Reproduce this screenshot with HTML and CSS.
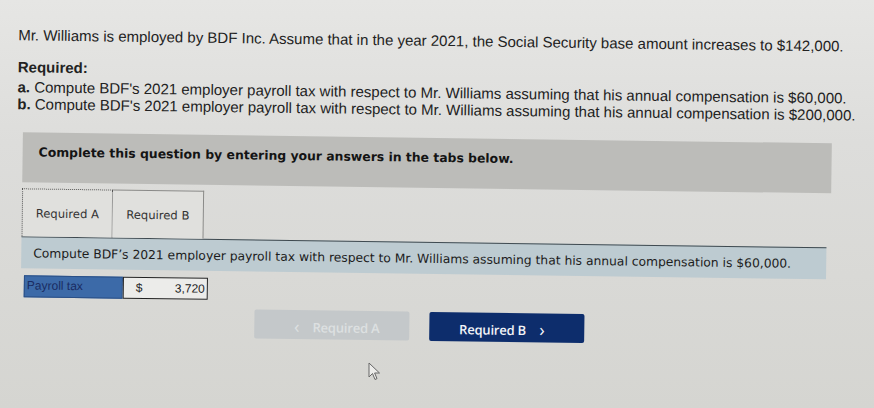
FILE: index.html
```html
<!DOCTYPE html>
<html lang="en">
<head>
  <meta charset="UTF-8" />
  <meta name="viewport" content="width=device-width, initial-scale=1.0" />
  <title>Payroll Tax Question</title>
  <link rel="stylesheet" href="styles.css">
</head>
<body>
  <div class="page">
    <p class="intro">Mr. Williams is employed by BDF Inc. Assume that in the year 2021, the Social Security base amount increases to $142,000.</p>

    <div class="required">
      <div class="required-title">Required:</div>
      <div class="req-list">
        <div class="req-line"><b>a.</b> Compute BDF's 2021 employer payroll tax with respect to Mr. Williams assuming that his annual compensation is $60,000.</div>
        <div class="req-line"><b>b.</b> Compute BDF's 2021 employer payroll tax with respect to Mr. Williams assuming that his annual compensation is $200,000.</div>
      </div>
    </div>

    <div class="panel">
      <div class="panel-head">Complete this question by entering your answers in the tabs below.</div>

      <div class="tabs">
        <div class="tab active">Required A</div>
        <div class="tab">Required B</div>
      </div>

      <div class="tab-body">Compute BDF’s 2021 employer payroll tax with respect to Mr. Williams assuming that his annual compensation is $60,000.</div>

      <div class="answer">
        <div class="answer-label">Payroll tax</div>
        <div class="answer-input">
          <span class="dollar">$</span>
          <span class="amount">3,720</span>
        </div>
      </div>

      <div class="nav">
        <button class="nav-btn prev" disabled><span class="chev">&lsaquo;</span> Required A</button>
        <button class="nav-btn next">Required B <span class="chev">&rsaquo;</span></button>
      </div>
    </div>
  </div>

  <svg class="cursor" width="14" height="20" viewBox="0 0 14 20">
    <path d="M1 1 L1 15 L4.5 11.5 L7 17.5 L9 16.6 L6.6 11 L11.5 11 Z" fill="#ececea" stroke="#666" stroke-width="1"/>
  </svg>
</body>
</html>
```

FILE: styles.css
```css
body {
  margin: 0;
  padding: 0;
  font-family: "Liberation Sans", Arial, sans-serif;
  color: #222;
  background: linear-gradient(to bottom, #e6e6e4 0%, #dddddb 35%, #d5d5d1 100%);
  height: 408px;
  overflow: hidden;
}

/* the screen was photographed slightly tilted */
.page {
  padding: 26px 0 0 16px;
  transform: rotate(0.78deg);
  transform-origin: 0 200px;
}

.intro {
  margin: 0;
  font-size: 15px;
  line-height: 17px;
}

.required {
  margin-top: 15px;
  font-size: 15px;
  line-height: 17px;
}

.required-title {
  font-weight: bold;
}

.req-list {
  margin-top: 3px;
}

.panel {
  margin-top: 20px;
  margin-left: 6px;
  width: 809px;
  font-family: "DejaVu Sans", Verdana, sans-serif;
}

.panel-head {
  height: 50px;
  box-sizing: border-box;
  background-color: #bcbcb9;
  padding: 12px 0 0 16px;
  font-size: 12.4px;
  line-height: 16px;
  font-weight: bold;
  color: #141414;
}

.tabs {
  display: flex;
  margin-top: 6px;
}

.tab {
  width: 91px;
  height: 48px;
  box-sizing: border-box;
  border: 1px solid #8a8a88;
  border-bottom: none;
  background-color: #e0e0dd;
  display: flex;
  align-items: center;
  justify-content: center;
  font-size: 11.6px;
  color: #333;
}

.tab.active {
  border: 1px dotted #555;
  border-bottom: none;
}

.tab + .tab {
  border-left: none;
}

.tab-body {
  width: 805px;
  height: 32px;
  box-sizing: border-box;
  border-top: 1px solid #3f4a50;
  background-color: #bdcbd1;
  padding-left: 12px;
  display: flex;
  align-items: center;
  font-size: 12.3px;
  color: #1c1c1c;
}

.answer {
  display: flex;
  margin-top: 7px;
  margin-left: 3px;
  height: 22px;
}

.answer-label {
  width: 99px;
  box-sizing: border-box;
  border: 1px solid #2a4f86;
  background-color: #3c6aa8;
  color: #1a2c62;
  font-family: "Liberation Sans", Arial, sans-serif;
  font-size: 12px;
  line-height: 18px;
  padding-left: 2px;
}

.answer-input {
  width: 85px;
  box-sizing: border-box;
  border: 1px solid #222;
  background-color: #ececea;
  display: flex;
  justify-content: space-between;
  align-items: center;
  padding: 0 2px 0 12px;
  font-family: "Liberation Sans", Arial, sans-serif;
  font-size: 12px;
  color: #222;
}

.nav {
  display: flex;
  gap: 20px;
  margin-top: 9px;
  margin-left: 234px;
}

.nav-btn {
  width: 155px;
  height: 29px;
  border: none;
  border-radius: 2px;
  font-family: "Open Sans", Arial, sans-serif;
  font-size: 13px;
  font-weight: 600;
  letter-spacing: -0.2px;
}

.chev {
  font-size: 18px;
  font-weight: 400;
  margin: 0 10px;
  position: relative;
  top: 1px;
}

.prev {
  background-color: #c4c8ca;
  color: #dde0e1;
}

.next {
  background-color: #0d2d6c;
  color: #f2f4f8;
  cursor: pointer;
}

.cursor {
  position: absolute;
  left: 368px;
  top: 362px;
}
```
